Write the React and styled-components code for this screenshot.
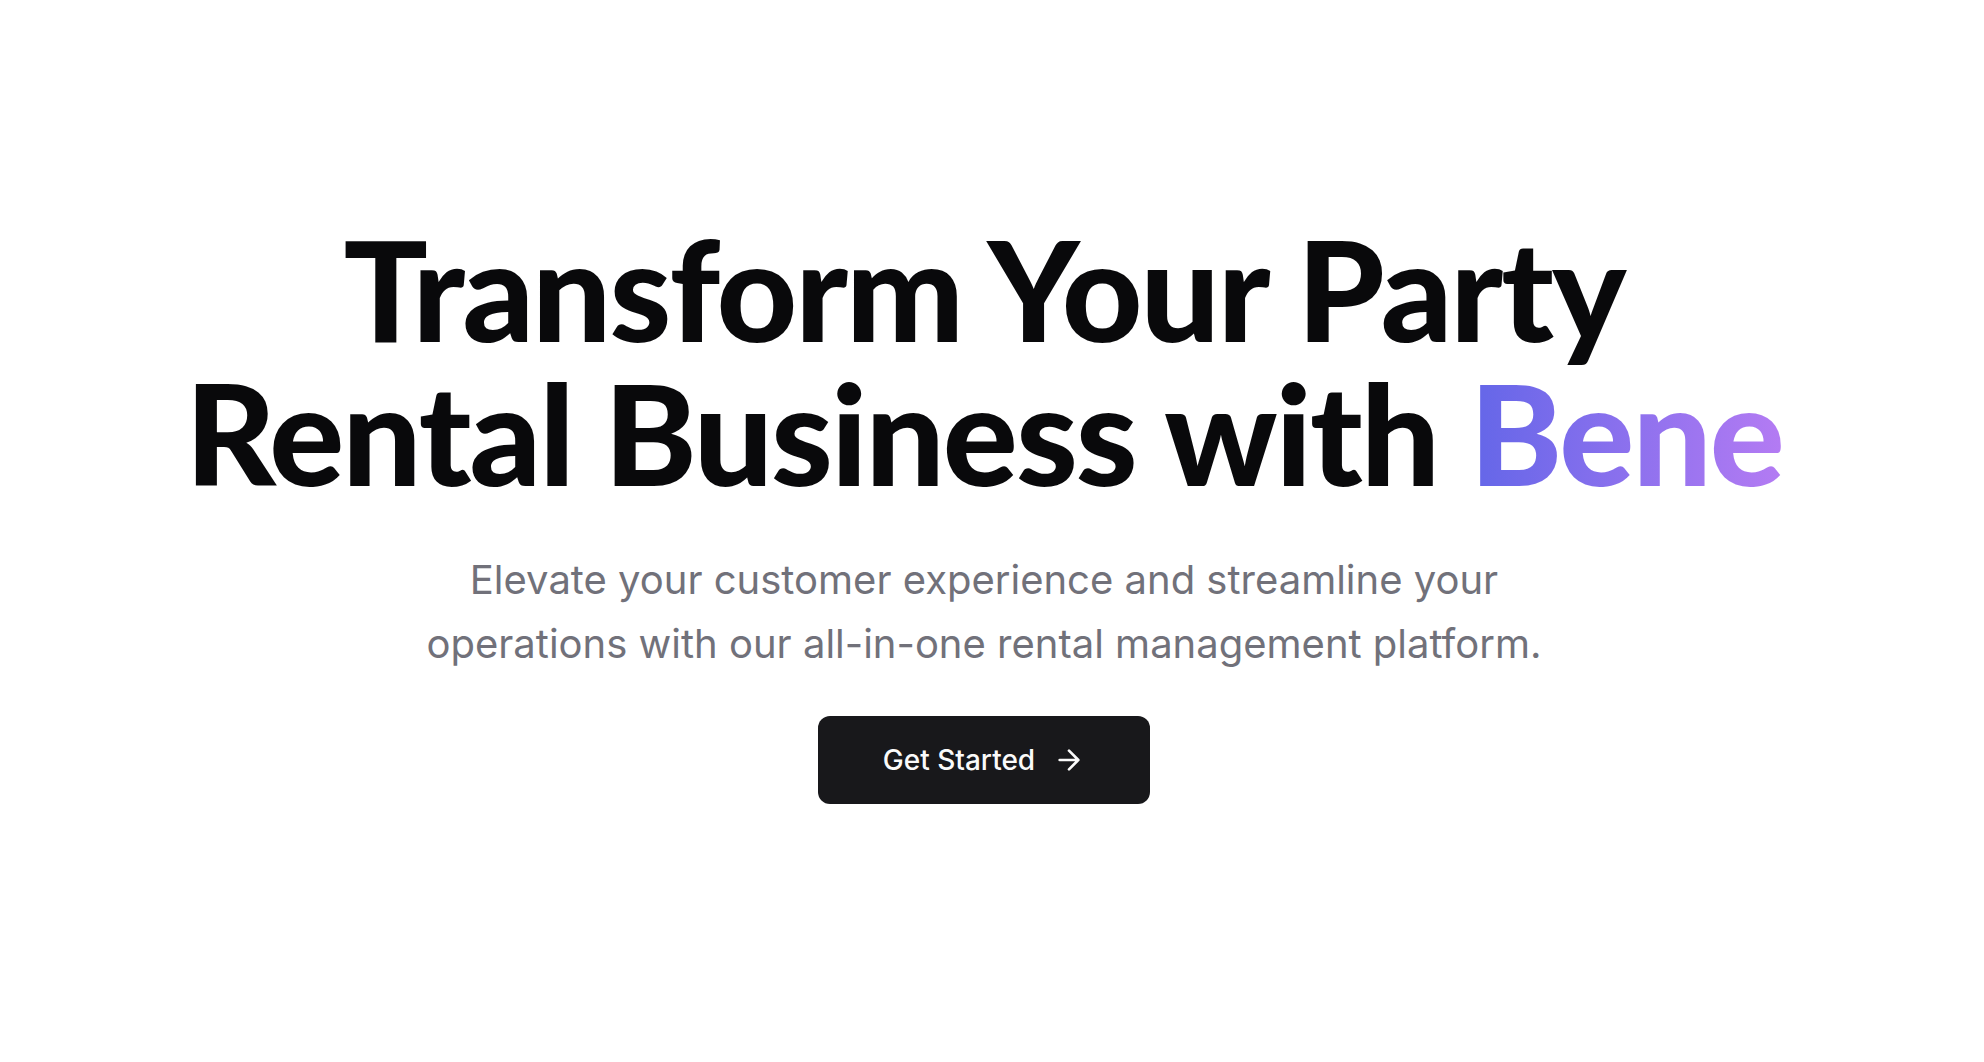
import React from "react";
import styled, { createGlobalStyle } from "styled-components";

const GlobalStyle = createGlobalStyle`
  *, *::before, *::after { box-sizing: border-box; }
  body {
    margin: 0;
    background: #ffffff;
    color: #09090b;
    font-family: Inter, "Liberation Sans", sans-serif;
    -webkit-font-smoothing: antialiased;
  }
`;

const Hero = styled.main`
  display: flex;
  flex-direction: column;
  align-items: center;
  justify-content: center;
  min-height: 100vh;
  padding: 24px 48px 66px 32px;
  text-align: center;
`;

const Title = styled.h1`
  max-width: 1792px;
  margin: 0;
  font-family: Lato, Inter, sans-serif;
  font-size: 140px;
  line-height: 144px;
  font-weight: 900;
  letter-spacing: -2px;
`;

const Brand = styled.span`
  background: linear-gradient(to right, #6366e8, #b47bf3);
  background-clip: text;
  -webkit-background-clip: text;
  color: transparent;
`;

const Lead = styled.p`
  max-width: 1152px;
  margin: 44px 0 40px;
  color: #71717a;
  font-size: 40px;
  line-height: 64px;
  font-variant-ligatures: no-common-ligatures;
`;

const Button = styled.button`
  display: inline-flex;
  align-items: center;
  justify-content: center;
  gap: 18px;
  height: 88px;
  padding: 0 65px;
  border: 0;
  border-radius: 12px;
  background: #18181b;
  color: #fafafa;
  font: 500 28px/40px Inter, "Liberation Sans", sans-serif;
  cursor: pointer;
`;

const ArrowIcon = styled.svg`
  width: 32px;
  height: 32px;
  fill: none;
  stroke: currentColor;
  stroke-width: 2;
  stroke-linecap: round;
  stroke-linejoin: round;
`;

export default function App() {
  return (
    <>
      <GlobalStyle />
      <Hero>
        <Title>
          Transform Your Party<br />
          Rental Business with <Brand>Bene</Brand>
        </Title>
        <Lead>
          Elevate your customer experience and streamline your operations
          with our all-in-one rental management platform.
        </Lead>
        <Button type="button">
          Get Started
          <ArrowIcon viewBox="0 0 24 24" aria-hidden="true">
            <path d="M5 12h14M12 5l7 7-7 7" />
          </ArrowIcon>
        </Button>
      </Hero>
    </>
  );
}
